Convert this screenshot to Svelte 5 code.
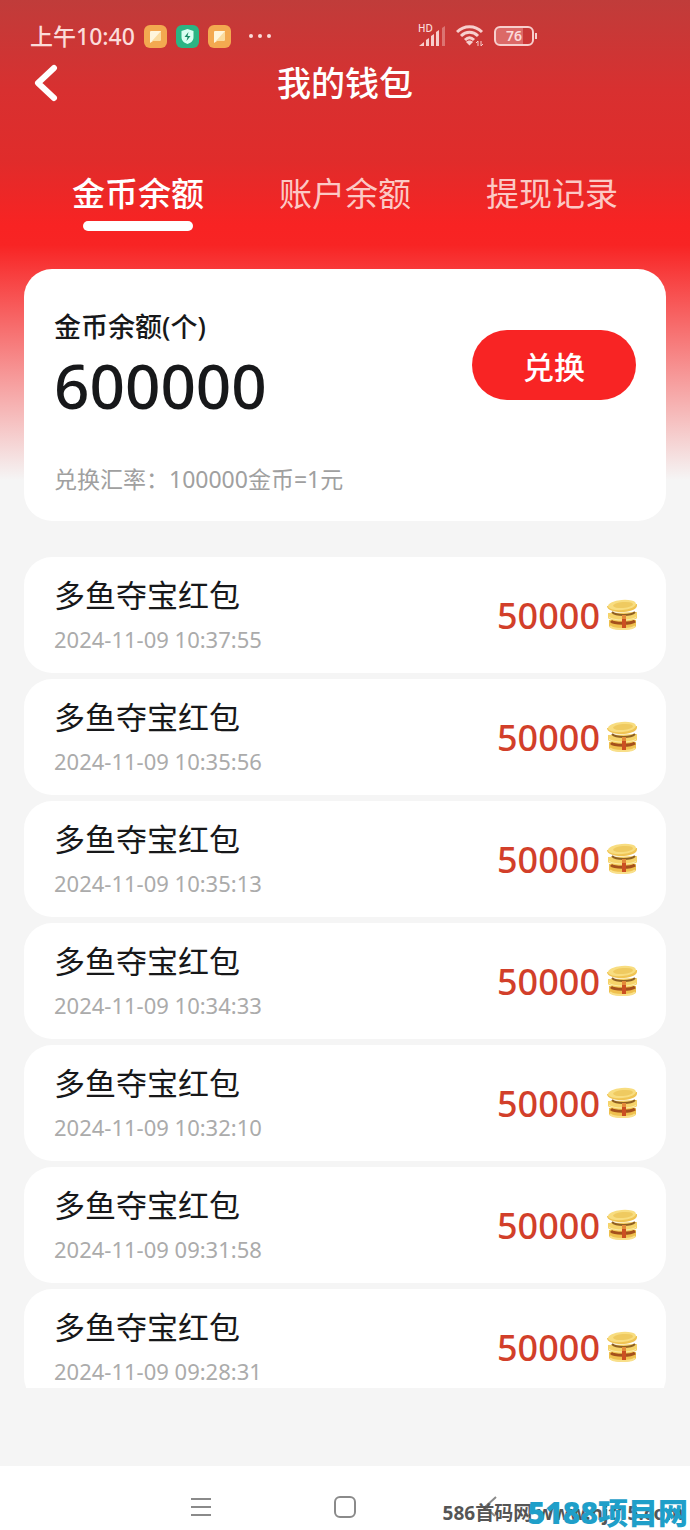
<script lang="ts">
  // Tabs on top of the wallet page
  const tabs = ['金币余额', '账户余额', '提现记录'];
  let active = $state(0);

  let balance = 600000;

  const records = [
    { name: '多鱼夺宝红包', time: '2024-11-09 10:37:55', amount: 50000 },
    { name: '多鱼夺宝红包', time: '2024-11-09 10:35:56', amount: 50000 },
    { name: '多鱼夺宝红包', time: '2024-11-09 10:35:13', amount: 50000 },
    { name: '多鱼夺宝红包', time: '2024-11-09 10:34:33', amount: 50000 },
    { name: '多鱼夺宝红包', time: '2024-11-09 10:32:10', amount: 50000 },
    { name: '多鱼夺宝红包', time: '2024-11-09 09:31:58', amount: 50000 },
    { name: '多鱼夺宝红包', time: '2024-11-09 09:28:31', amount: 50000 }
  ];
</script>

{#snippet noteIcon()}
  <svg width="23" height="23" viewBox="0 0 23 23" aria-hidden="true">
    <rect width="23" height="23" rx="6" fill="#f3a950" />
    <path d="M6 7q0-1 1-1h10v8q0 2-2 2H9l-3 2z" fill="#fff6dc" />
    <path d="M17 6v8q0 2-2 2H8z" fill="#fbdc9f" />
  </svg>
{/snippet}

{#snippet coins()}
  <svg class="coins" width="34" height="34" viewBox="0 0 34 34" aria-hidden="true">
    <path d="M4 22v6c1 5 26 5 27 0v-6z" fill="#efc04e" />
    <path d="M5 28c2 4 23 4 25 0" fill="none" stroke="#f9e08a" stroke-width="2" />
    <path d="M6 23c3 3 20 3 24 0" fill="none" stroke="#a4501c" stroke-width="3" />
    <path d="M3 15v5c2 4 27 4 29 0v-6z" fill="#f6d36a" />
    <path d="M4 19c3 4 24 4 27 0" fill="none" stroke="#fceba4" stroke-width="1" />
    <path d="M7 14c4 4 19 4 23 0" fill="none" stroke="#8e5f22" stroke-width="2" />
    <path d="M2 8c0 8 28 8 30 0V6z" fill="#f0c453" />
    <ellipse cx="17" cy="7" rx="14" ry="5" fill="#f8dd80" transform="rotate(-5 17 7)" />
    <ellipse cx="18" cy="7" rx="10" ry="3" fill="#efca60" transform="rotate(-5 18 7)" />
    <path d="M17 17h4v4h-4z" fill="#e38a3a" />
    <path d="M17 21h4v9h-4z" fill="#cb4f22" />
  </svg>
{/snippet}

<div class="page">
  <div class="status">
    <span class="clock">上午10:40</span>
    {@render noteIcon()}
    <svg width="23" height="23" viewBox="0 0 23 23" aria-hidden="true">
      <rect width="23" height="23" rx="6" fill="#2bb583" />
      <path d="M11.500 4l6 2v6c0 4-3 6-6 7-3-1-6-3-6-7V6z" fill="#d8fff0" />
      <path d="M12.500 7l-4 5h3l-1 4 4-5h-3z" fill="#178a63" />
    </svg>
    {@render noteIcon()}
    <svg class="more" width="24" height="6" viewBox="0 0 24 6" fill="#fbdcda" aria-hidden="true">
      <circle cx="3" cy="3" r="2" /><circle cx="12" cy="3" r="2" /><circle cx="21" cy="3" r="2" />
    </svg>
    <div class="system">
      <div class="signal">
        <span class="hd">HD</span>
        <svg width="28" height="22" viewBox="0 0 28 22" fill="#f7cfcd" aria-hidden="true">
          <path d="M1 21l5-4v4zM8 15l3-2v8H8zM13 11l3-2v12h-3zM18 7l3-2v16h-3z" />
          <path d="M24 3l3-2v20h-3z" opacity="0.4" />
        </svg>
      </div>
      <svg width="28" height="24" viewBox="0 0 28 24" fill="none" stroke="#f7cfcd" stroke-width="3" aria-hidden="true">
        <path d="M1 8c7-7 18-7 25 0M5 12c5-5 12-5 17 0M9 16c3-3 6-3 9 0" />
        <path d="M10 18l3.500 3.500L17 18c-2-2-5-2-7 0z" fill="#f7cfcd" stroke="none" />
        <path d="M22 22v-5l-2 2M25 17v5l2-2" stroke-width="1" />
      </svg>
      <div class="battery"><span>76</span></div>
    </div>
  </div>

  <header>
    <button class="back" aria-label="返回">
      <svg width="26" height="40" viewBox="0 0 26 40" fill="none" stroke="#fff" stroke-width="6" stroke-linecap="round" stroke-linejoin="round" aria-hidden="true">
        <path d="M20 5L4 20 20 35" />
      </svg>
    </button>
    <h1>我的钱包</h1>
  </header>

  <nav class="tabs">
    {#each tabs as tab, i}
      <button class="tab" class:active={active === i} onclick={() => (active = i)}>{tab}</button>
    {/each}
  </nav>

  <section class="card">
    <div class="card-main">
      <div>
        <p class="label">金币余额(个)</p>
        <p class="balance">{balance}</p>
      </div>
      <button class="exchange">兑换</button>
    </div>
    <p class="rate">兑换汇率：100000金币=1元</p>
  </section>

  <ul class="records">
    {#each records as r}
      <li>
        <div>
          <p class="name">{r.name}</p>
          <p class="time">{r.time}</p>
        </div>
        <div class="amount">
          <span>{r.amount}</span>
          {@render coins()}
        </div>
      </li>
    {/each}
  </ul>

  <footer>
    <button aria-label="菜单">
      <svg width="22" height="22" viewBox="0 0 22 22" stroke="#8a8a8a" stroke-width="2" aria-hidden="true">
        <path d="M1 3h20M1 11h20M1 19h20" />
      </svg>
    </button>
    <button aria-label="主页">
      <svg width="22" height="22" viewBox="0 0 22 22" fill="none" stroke="#8a8a8a" stroke-width="2" aria-hidden="true">
        <rect x="1" y="1" width="20" height="20" rx="5" />
      </svg>
    </button>
    <button aria-label="返回上一页">
      <svg width="22" height="22" viewBox="0 0 22 22" fill="none" stroke="#8a8a8a" stroke-width="2" aria-hidden="true">
        <path d="M18 1L7 11l10 9" />
      </svg>
    </button>
    <span class="mark-gray">586首码网 www.hjt15.com</span>
    <span class="mark-blue">5188<span class="mark-line">项目网</span></span>
  </footer>
</div>

<style>
  :global(body) {
    margin: 0;
    background: #f5f5f5;
  }
  .page {
    display: flex;
    flex-direction: column;
    height: 100vh;
    font-family: "Noto Sans", "Noto Sans CJK SC", sans-serif;
    color: #17181a;
    background: #f5f5f5 linear-gradient(#c03c3a 0, #d83030 90px, #e02c2b 160px, #f82323 225px, #f82424 245px, #f5f5f5 480px) no-repeat;
  }
  p, h1, ul {
    margin: 0;
    padding: 0;
  }
  button {
    padding: 0;
    border: none;
    background: none;
    font-family: inherit;
    color: inherit;
    cursor: pointer;
  }
  svg {
    display: block;
    flex: none;
  }

  /* status bar */
  .status {
    display: flex;
    align-items: center;
    gap: 9px;
    height: 32px;
    padding: 20px 30px 0;
    color: #fbdcda;
  }
  .clock {
    font-size: 23px;
    font-weight: 500;
    line-height: 32px;
  }
  .more {
    margin-left: 8px;
  }
  .system {
    display: flex;
    align-items: center;
    gap: 10px;
    margin-left: auto;
    margin-right: 126px;
  }
  .signal {
    position: relative;
  }
  .hd {
    position: absolute;
    top: -2px;
    left: 0;
    font-size: 10px;
    font-weight: 500;
    line-height: 10px;
  }
  .battery {
    position: relative;
    width: 36px;
    height: 16px;
    border: 2px solid #f7cfcd;
    border-radius: 6px;
    font-size: 14px;
    font-weight: 600;
    line-height: 16px;
    text-align: center;
    background: linear-gradient(90deg, #dc6967 76%, transparent 76%);
  }
  .battery::after {
    content: '';
    position: absolute;
    top: 5px;
    right: -5px;
    width: 2px;
    height: 6px;
    background: #f7cfcd;
  }

  header {
    display: grid;
    grid-template-columns: 26px 1fr 26px;
    align-items: center;
    height: 62px;
    padding: 0 34px;
    color: #fff;
  }
  h1 {
    font-size: 34px;
    font-weight: 500;
    line-height: 62px;
    text-align: center;
  }

  .tabs {
    display: grid;
    grid-template-columns: repeat(3, 1fr);
    padding: 55px 5% 0;
  }
  .tab {
    display: flex;
    flex-direction: column;
    align-items: center;
    height: 62px;
    font-size: 33px;
    line-height: 50px;
    color: #fcc9c5;
  }
  .tab.active {
    font-weight: 500;
    color: #fff;
  }
  .tab.active::after {
    content: '';
    width: 110px;
    height: 10px;
    margin-top: 2px;
    border-radius: 5px;
    background: #fff;
  }

  .card {
    margin: 38px 24px 0;
    padding: 38px 30px 24px;
    border-radius: 28px;
    background: #fff;
  }
  .card-main {
    display: flex;
    justify-content: space-between;
    align-items: center;
  }
  .label {
    font-size: 27px;
    font-weight: 500;
    line-height: 40px;
  }
  .balance {
    font-size: 62px;
    font-weight: 500;
    line-height: 76px;
  }
  .exchange {
    width: 164px;
    height: 70px;
    border-radius: 35px;
    background: #f82424;
    color: #fff;
    font-size: 31px;
    font-weight: 500;
  }
  .rate {
    margin-top: 38px;
    font-size: 23px;
    line-height: 36px;
    color: #a0a0a0;
  }

  .records {
    flex: 1;
    min-height: 0;
    overflow: hidden;
    margin: 36px 24px 78px;
    list-style: none;
  }
  li {
    display: flex;
    justify-content: space-between;
    align-items: center;
    height: 116px;
    margin-bottom: 6px;
    padding: 0 27px 0 30px;
    border-radius: 28px;
    background: #fff;
  }
  .name {
    font-size: 31px;
    line-height: 48px;
  }
  .time {
    font-size: 22px;
    line-height: 40px;
    color: #ababab;
  }
  .amount {
    display: flex;
    align-items: center;
    gap: 5px;
    font-size: 36px;
    font-weight: 500;
    color: #d23f2a;
  }

  /* system navigation */
  footer {
    position: relative;
    display: flex;
    justify-content: center;
    align-items: center;
    gap: 122px;
    height: 64px;
    background: #fff;
  }
  footer button {
    padding-top: 18px;
  }
  .mark-gray,
  .mark-blue {
    position: absolute;
    white-space: nowrap;
  }
  .mark-gray {
    right: 6px;
    bottom: 4px;
    font-size: 19px;
    font-weight: 700;
    line-height: 26px;
    color: #555;
  }
  .mark-blue {
    right: 2px;
    bottom: 0;
    font-size: 30px;
    font-weight: 900;
    line-height: 34px;
    color: #1f9fc9;
  }
  .mark-line {
    box-shadow: inset 0 -2px #1f9fc9;
  }
</style>
